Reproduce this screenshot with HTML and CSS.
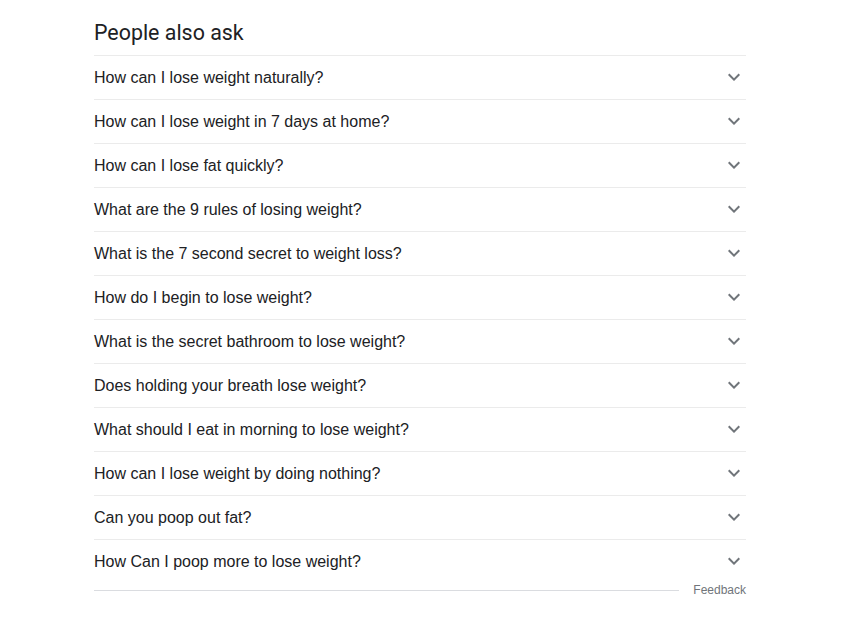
FILE: index.html
```html
<!DOCTYPE html>
<html>
<head>
<meta charset="utf-8">
<link rel="stylesheet" href="styles.css">
</head>
<body>
<div class="paa">
  <h2 class="paa-title">People also ask</h2>
  <div class="paa-list">
    <div class="paa-row"><span class="q">How can I lose weight naturally?</span><svg class="chev" viewBox="0 0 24 24"><path d="M16.59 8.59L12 13.17 7.41 8.59 6 10l6 6 6-6z"/></svg></div>
    <div class="paa-row"><span class="q">How can I lose weight in 7 days at home?</span><svg class="chev" viewBox="0 0 24 24"><path d="M16.59 8.59L12 13.17 7.41 8.59 6 10l6 6 6-6z"/></svg></div>
    <div class="paa-row"><span class="q">How can I lose fat quickly?</span><svg class="chev" viewBox="0 0 24 24"><path d="M16.59 8.59L12 13.17 7.41 8.59 6 10l6 6 6-6z"/></svg></div>
    <div class="paa-row"><span class="q">What are the 9 rules of losing weight?</span><svg class="chev" viewBox="0 0 24 24"><path d="M16.59 8.59L12 13.17 7.41 8.59 6 10l6 6 6-6z"/></svg></div>
    <div class="paa-row"><span class="q">What is the 7 second secret to weight loss?</span><svg class="chev" viewBox="0 0 24 24"><path d="M16.59 8.59L12 13.17 7.41 8.59 6 10l6 6 6-6z"/></svg></div>
    <div class="paa-row"><span class="q">How do I begin to lose weight?</span><svg class="chev" viewBox="0 0 24 24"><path d="M16.59 8.59L12 13.17 7.41 8.59 6 10l6 6 6-6z"/></svg></div>
    <div class="paa-row"><span class="q">What is the secret bathroom to lose weight?</span><svg class="chev" viewBox="0 0 24 24"><path d="M16.59 8.59L12 13.17 7.41 8.59 6 10l6 6 6-6z"/></svg></div>
    <div class="paa-row"><span class="q">Does holding your breath lose weight?</span><svg class="chev" viewBox="0 0 24 24"><path d="M16.59 8.59L12 13.17 7.41 8.59 6 10l6 6 6-6z"/></svg></div>
    <div class="paa-row"><span class="q">What should I eat in morning to lose weight?</span><svg class="chev" viewBox="0 0 24 24"><path d="M16.59 8.59L12 13.17 7.41 8.59 6 10l6 6 6-6z"/></svg></div>
    <div class="paa-row"><span class="q">How can I lose weight by doing nothing?</span><svg class="chev" viewBox="0 0 24 24"><path d="M16.59 8.59L12 13.17 7.41 8.59 6 10l6 6 6-6z"/></svg></div>
    <div class="paa-row"><span class="q">Can you poop out fat?</span><svg class="chev" viewBox="0 0 24 24"><path d="M16.59 8.59L12 13.17 7.41 8.59 6 10l6 6 6-6z"/></svg></div>
    <div class="paa-row last"><span class="q">How Can I poop more to lose weight?</span><svg class="chev" viewBox="0 0 24 24"><path d="M16.59 8.59L12 13.17 7.41 8.59 6 10l6 6 6-6z"/></svg></div>
  </div>
  <div class="paa-feedback">
    <div class="fb-line"></div>
    <span class="fb-text">Feedback</span>
  </div>
</div>
</body>
</html>
```
FILE: styles.css
```css
html, body {
  margin: 0;
  padding: 0;
  background: #fff;
}
body {
  font-family: Arial, "Liberation Sans", sans-serif;
  color: #202124;
}
.paa {
  width: 652px;
  margin-left: 94px;
}
.paa-title {
  margin: 0;
  padding-top: 19px;
  height: 36px;
  font-family: Roboto, "Liberation Sans", sans-serif;
  font-weight: 400;
  font-size: 21.4px;
  line-height: 28px;
  color: #202124;
  border-bottom: 1px solid #ebebeb;
}
.paa-row {
  height: 43px;
  display: flex;
  align-items: center;
  justify-content: space-between;
  border-bottom: 1px solid #ebebeb;
}
.paa-row.last {
  border-bottom: none;
}
.q {
  font-size: 16px;
  line-height: 24px;
}
.chev {
  width: 24px;
  height: 24px;
  fill: #70757a;
  flex: none;
  margin-top: -1px;
}
.paa-feedback {
  display: flex;
  align-items: center;
  height: 14px;
}
.fb-line {
  flex: 1;
  border-top: 1px solid #dadce0;
  margin-right: 14px;
}
.fb-text {
  font-size: 12px;
  line-height: 14px;
  color: #70757a;
}
```
